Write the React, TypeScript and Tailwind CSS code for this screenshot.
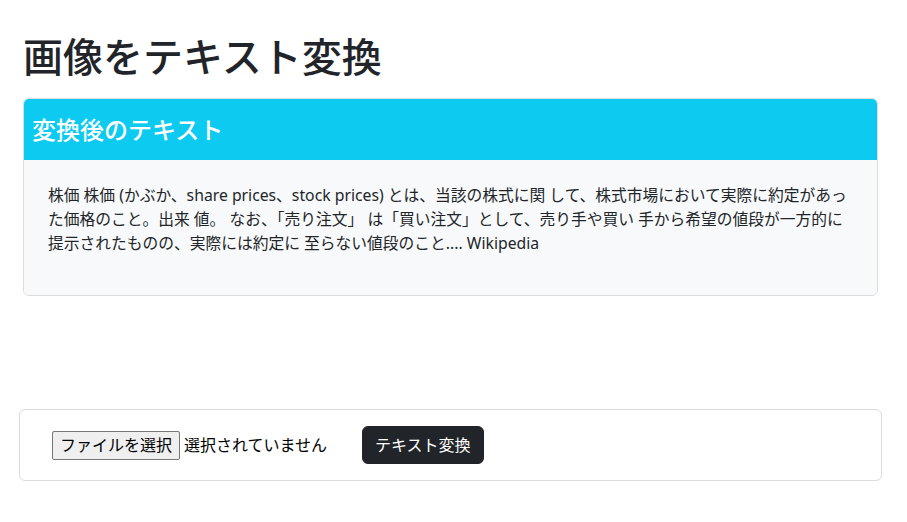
export default function App() {
    const font = { fontFamily: '"Noto Sans", "Noto Sans CJK JP", sans-serif' }

    return (
        <main className="w-screen min-h-screen bg-white text-[#212529]" style={font}>
            <section className="pl-[23px] pr-[29px] pt-[33px]">
                <h1 className="text-[40px] leading-[48px] font-medium mb-[17px]">画像をテキスト変換</h1>

                <div className="border border-[#dcdcdc] rounded-md overflow-hidden">
                    <div className="bg-[#0dcaf0] h-[61px] px-2 flex items-center">
                        <h4 className="text-white text-[24px] leading-[29px] font-medium">変換後のテキスト</h4>
                    </div>
                    <div className="bg-[#f8f9fa] px-6 pt-[23px] pb-[40px]">
                        <p className="text-[15.75px] leading-[24px]">
                            株価 株価 (かぶか、share prices、stock prices) とは、当該の株式に関 して、株式市場において実際に約定があった価格のこと。出来 値。 なお、「売り注文」 は「買い注文」として、売り手や買い 手から希望の値段が一方的に提示されたものの、実際には約定に 至らない値段のこと.... Wikipedia
                        </p>
                    </div>
                </div>
            </section>

            <section className="pl-[19px] pr-[25px] mt-[113px]">
                <div className="border border-[#dcdcdc] rounded-md h-[72px] flex items-center pl-8">
                    <span className="bg-[#efefef] border border-[#767676] rounded-[2px] px-[7px] py-[4px] text-[16px] leading-[19px] text-black">ファイルを選択</span>
                    <span className="ml-[4px] text-[16px] text-black">選択されていません</span>
                    <button className="ml-[35px] bg-[#212529] text-white rounded-md px-3 py-1.5 text-[16px] leading-[24px] border border-[#212529]">テキスト変換</button>
                </div>
            </section>
        </main>
    )
}
